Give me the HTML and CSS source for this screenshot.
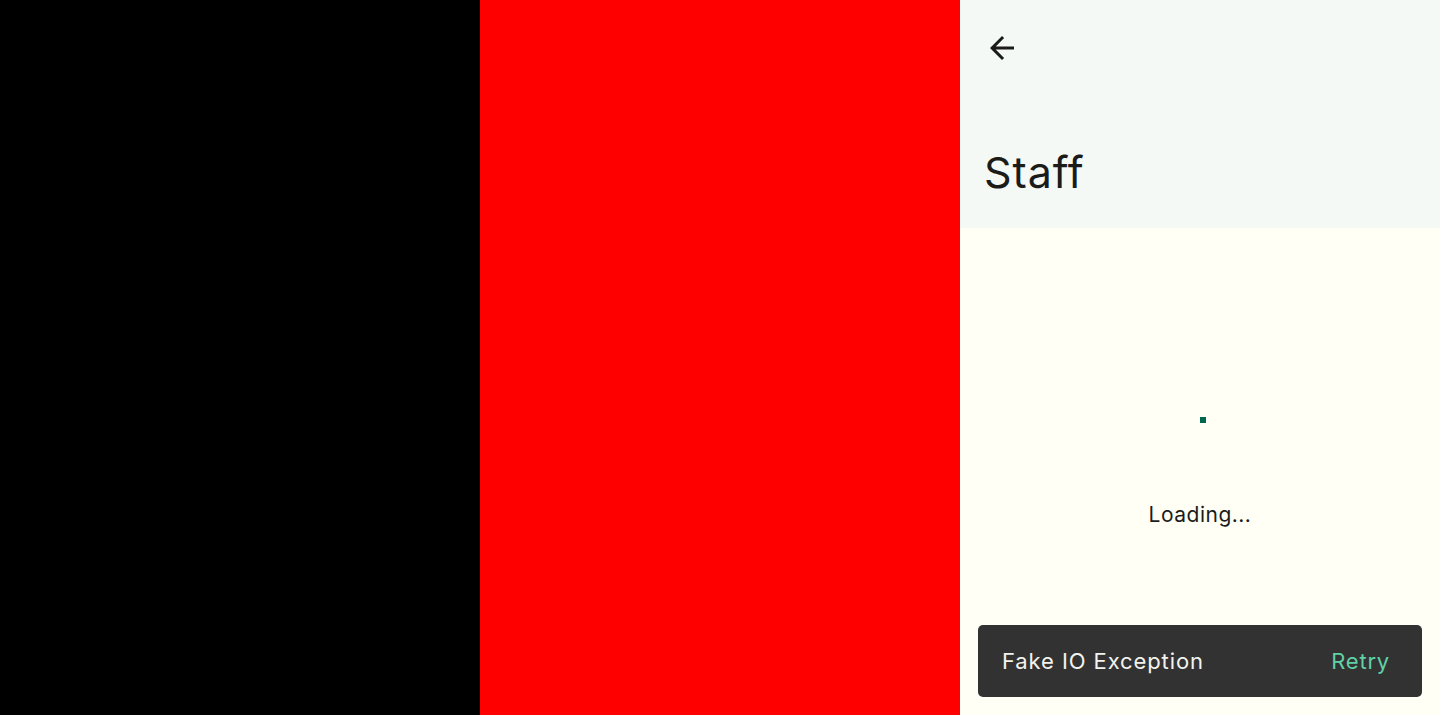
FILE: index.html
```html
<!DOCTYPE html>
<html>
<head>
<meta charset="utf-8">
<link rel="stylesheet" href="styles.css">
</head>
<body>
<div class="split">
  <div class="pane pane-black"></div>
  <div class="pane pane-red"></div>
  <div class="pane app">
    <header class="topbar">
      <div class="nav-row">
        <button class="icon-btn" aria-label="Back">
          <svg width="36" height="36" viewBox="0 0 24 24"><path d="M20 11H7.83l5.59-5.59L12 4l-8 8 8 8 1.41-1.41L7.83 13H20v-2z" fill="#1b1c1a"/></svg>
        </button>
      </div>
      <h1 class="title">Staff</h1>
    </header>
    <main class="content">
      <div class="loader">
        <div class="spinner-dot"></div>
        <div class="loading-text">Loading...</div>
      </div>
      <div class="snackbar">
        <span class="snack-msg">Fake IO Exception</span>
        <span class="snack-action">Retry</span>
      </div>
    </main>
  </div>
</div>
</body>
</html>
```
FILE: styles.css
```css
* { box-sizing: border-box; }
html, body { margin: 0; padding: 0; height: 100%; }
body { font-family: "Inter", "Noto Sans", sans-serif; }
.split { display: flex; height: 715px; width: 1440px; }
.pane { flex: 0 0 480px; height: 100%; }
.pane-black { background: #000000; }
.pane-red { background: #ff0000; }
.app { display: flex; flex-direction: column; background: #fffff6; }
.topbar { background: #f4f9f6; height: 228px; display: flex; flex-direction: column; padding: 24px 0 0 18px; }
.nav-row { height: 48px; display: flex; align-items: center; }
.icon-btn { width: 48px; height: 48px; border: none; background: transparent; padding: 0; display: flex; align-items: center; justify-content: center; }
.title { margin: 76px 0 0 6px; font-weight: 400; font-size: 43px; line-height: 48px; color: #1b1c1a; letter-spacing: 0.9px; }
.content { flex: 1; position: relative; display: flex; flex-direction: column; align-items: center; padding: 0 18px 18px; }
.loader { flex: 1; display: flex; flex-direction: column; align-items: center; padding-top: 189px; }
.spinner-dot { width: 6px; height: 6px; background: #00684f; margin-left: 5px; }
.loading-text { margin-top: 78px; font-size: 21px; line-height: 28px; color: #1b1c1a; letter-spacing: 0.5px; }
.snackbar { width: 444px; height: 72px; background: #323232; border-radius: 5px; display: flex; align-items: center; justify-content: space-between; padding: 0 32px 0 24px; }
.snack-msg { font-size: 22px; color: #f2f2ee; letter-spacing: 0.9px; }
.snack-action { font-size: 22px; color: #5fd1a5; letter-spacing: 0.8px; }
```
